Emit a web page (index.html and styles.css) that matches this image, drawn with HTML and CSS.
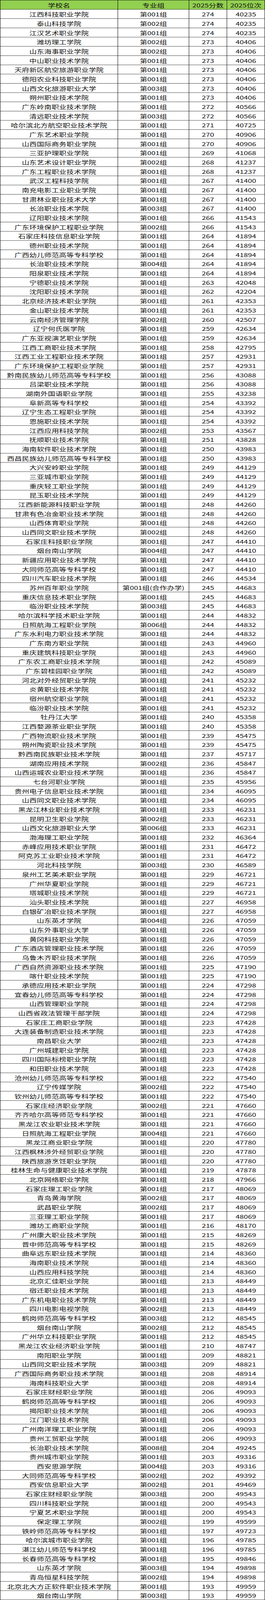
FILE: index.html
```html
<!DOCTYPE html>
<html lang="zh-CN">
<head>
<meta charset="utf-8">
<title>2025 分数位次</title>
<link rel="stylesheet" href="styles.css">
</head>
<body>
<div class="frame">
<div class="sheet" role="table">
<div class="row head" role="row"><div class="cell" role="columnheader">学校名</div><div class="cell" role="columnheader">专业组</div><div class="cell" role="columnheader">2025分数</div><div class="cell" role="columnheader">2025位次</div></div>
<div class="row" role="row"><div class="cell">江西科技职业学院</div><div class="cell">第001组</div><div class="cell">274</div><div class="cell">40235</div></div>
<div class="row" role="row"><div class="cell">泰山科技学院</div><div class="cell">第002组</div><div class="cell">274</div><div class="cell">40235</div></div>
<div class="row" role="row"><div class="cell">江汉艺术职业学院</div><div class="cell">第001组</div><div class="cell">274</div><div class="cell">40235</div></div>
<div class="row" role="row"><div class="cell">潍坊理工学院</div><div class="cell">第002组</div><div class="cell">273</div><div class="cell">40406</div></div>
<div class="row" role="row"><div class="cell">山东海事职业学院</div><div class="cell">第002组</div><div class="cell">273</div><div class="cell">40406</div></div>
<div class="row" role="row"><div class="cell">中山职业技术学院</div><div class="cell">第001组</div><div class="cell">273</div><div class="cell">40406</div></div>
<div class="row" role="row"><div class="cell">天府新区航空旅游职业学院</div><div class="cell">第001组</div><div class="cell">273</div><div class="cell">40406</div></div>
<div class="row" role="row"><div class="cell">德阳农业科技职业学院</div><div class="cell">第001组</div><div class="cell">273</div><div class="cell">40406</div></div>
<div class="row" role="row"><div class="cell">山西文化旅游职业大学</div><div class="cell">第003组</div><div class="cell">273</div><div class="cell">40406</div></div>
<div class="row" role="row"><div class="cell">朔州职业技术学院</div><div class="cell">第001组</div><div class="cell">273</div><div class="cell">40406</div></div>
<div class="row" role="row"><div class="cell">广东岭南职业技术学院</div><div class="cell">第001组</div><div class="cell">272</div><div class="cell">40566</div></div>
<div class="row" role="row"><div class="cell">清远职业技术学院</div><div class="cell">第003组</div><div class="cell">272</div><div class="cell">40566</div></div>
<div class="row" role="row"><div class="cell">哈尔滨北方航空职业技术学院</div><div class="cell">第001组</div><div class="cell">271</div><div class="cell">40725</div></div>
<div class="row" role="row"><div class="cell">广东艺术职业学院</div><div class="cell">第001组</div><div class="cell">270</div><div class="cell">40906</div></div>
<div class="row" role="row"><div class="cell">山西国际商务职业学院</div><div class="cell">第001组</div><div class="cell">270</div><div class="cell">40906</div></div>
<div class="row" role="row"><div class="cell">三亚护理职业学院</div><div class="cell">第001组</div><div class="cell">269</div><div class="cell">41068</div></div>
<div class="row" role="row"><div class="cell">山东艺术设计职业学院</div><div class="cell">第002组</div><div class="cell">268</div><div class="cell">41237</div></div>
<div class="row" role="row"><div class="cell">广东工程职业技术学院</div><div class="cell">第001组</div><div class="cell">268</div><div class="cell">41237</div></div>
<div class="row" role="row"><div class="cell">武汉工程科技学院</div><div class="cell">第001组</div><div class="cell">267</div><div class="cell">41400</div></div>
<div class="row" role="row"><div class="cell">南充电影工业职业学院</div><div class="cell">第001组</div><div class="cell">267</div><div class="cell">41400</div></div>
<div class="row" role="row"><div class="cell">甘肃林业职业技术大学</div><div class="cell">第001组</div><div class="cell">267</div><div class="cell">41400</div></div>
<div class="row" role="row"><div class="cell">长治职业技术学院</div><div class="cell">第003组</div><div class="cell">267</div><div class="cell">41400</div></div>
<div class="row" role="row"><div class="cell">辽阳职业技术学院</div><div class="cell">第001组</div><div class="cell">266</div><div class="cell">41543</div></div>
<div class="row" role="row"><div class="cell">广东环境保护工程职业学院</div><div class="cell">第002组</div><div class="cell">266</div><div class="cell">41543</div></div>
<div class="row" role="row"><div class="cell">石家庄科技信息职业学院</div><div class="cell">第001组</div><div class="cell">264</div><div class="cell">41894</div></div>
<div class="row" role="row"><div class="cell">德州职业技术学院</div><div class="cell">第001组</div><div class="cell">264</div><div class="cell">41894</div></div>
<div class="row" role="row"><div class="cell">广西幼儿师范高等专科学校</div><div class="cell">第001组</div><div class="cell">264</div><div class="cell">41894</div></div>
<div class="row" role="row"><div class="cell">长治职业技术学院</div><div class="cell">第004组</div><div class="cell">264</div><div class="cell">41894</div></div>
<div class="row" role="row"><div class="cell">阳泉职业技术学院</div><div class="cell">第001组</div><div class="cell">264</div><div class="cell">41894</div></div>
<div class="row" role="row"><div class="cell">宁德职业技术学院</div><div class="cell">第001组</div><div class="cell">263</div><div class="cell">42048</div></div>
<div class="row" role="row"><div class="cell">沈阳职业技术学院</div><div class="cell">第001组</div><div class="cell">262</div><div class="cell">42204</div></div>
<div class="row" role="row"><div class="cell">北京经济技术职业学院</div><div class="cell">第001组</div><div class="cell">261</div><div class="cell">42353</div></div>
<div class="row" role="row"><div class="cell">金山职业技术学院</div><div class="cell">第001组</div><div class="cell">261</div><div class="cell">42353</div></div>
<div class="row" role="row"><div class="cell">云南经济管理学院</div><div class="cell">第002组</div><div class="cell">260</div><div class="cell">42507</div></div>
<div class="row" role="row"><div class="cell">辽宁何氏医学院</div><div class="cell">第001组</div><div class="cell">259</div><div class="cell">42634</div></div>
<div class="row" role="row"><div class="cell">广东亚视演艺职业学院</div><div class="cell">第001组</div><div class="cell">259</div><div class="cell">42634</div></div>
<div class="row" role="row"><div class="cell">江西工商职业技术学院</div><div class="cell">第001组</div><div class="cell">258</div><div class="cell">42795</div></div>
<div class="row" role="row"><div class="cell">江西工业工程职业技术学院</div><div class="cell">第001组</div><div class="cell">257</div><div class="cell">42931</div></div>
<div class="row" role="row"><div class="cell">广东环境保护工程职业学院</div><div class="cell">第001组</div><div class="cell">257</div><div class="cell">42931</div></div>
<div class="row" role="row"><div class="cell">黔南民族幼儿师范高等专科学校</div><div class="cell">第001组</div><div class="cell">256</div><div class="cell">43088</div></div>
<div class="row" role="row"><div class="cell">吕梁职业技术学院</div><div class="cell">第001组</div><div class="cell">256</div><div class="cell">43088</div></div>
<div class="row" role="row"><div class="cell">湖南外国语职业学院</div><div class="cell">第001组</div><div class="cell">255</div><div class="cell">43238</div></div>
<div class="row" role="row"><div class="cell">阜新高等专科学校</div><div class="cell">第001组</div><div class="cell">254</div><div class="cell">43392</div></div>
<div class="row" role="row"><div class="cell">辽宁生态工程职业学院</div><div class="cell">第001组</div><div class="cell">254</div><div class="cell">43392</div></div>
<div class="row" role="row"><div class="cell">恩施职业技术学院</div><div class="cell">第001组</div><div class="cell">254</div><div class="cell">43392</div></div>
<div class="row" role="row"><div class="cell">江西应用科技学院</div><div class="cell">第002组</div><div class="cell">253</div><div class="cell">43567</div></div>
<div class="row" role="row"><div class="cell">抚顺职业技术学院</div><div class="cell">第001组</div><div class="cell">251</div><div class="cell">43828</div></div>
<div class="row" role="row"><div class="cell">海南软件职业技术学院</div><div class="cell">第001组</div><div class="cell">250</div><div class="cell">43983</div></div>
<div class="row" role="row"><div class="cell">西昌民族幼儿师范高等专科学校</div><div class="cell">第001组</div><div class="cell">250</div><div class="cell">43983</div></div>
<div class="row" role="row"><div class="cell">大兴安岭职业学院</div><div class="cell">第001组</div><div class="cell">249</div><div class="cell">44129</div></div>
<div class="row" role="row"><div class="cell">三亚城市职业学院</div><div class="cell">第001组</div><div class="cell">249</div><div class="cell">44129</div></div>
<div class="row" role="row"><div class="cell">重庆轻工职业学院</div><div class="cell">第001组</div><div class="cell">249</div><div class="cell">44129</div></div>
<div class="row" role="row"><div class="cell">昆玉职业技术学院</div><div class="cell">第001组</div><div class="cell">249</div><div class="cell">44129</div></div>
<div class="row" role="row"><div class="cell">江西新能源科技职业学院</div><div class="cell">第001组</div><div class="cell">248</div><div class="cell">44260</div></div>
<div class="row" role="row"><div class="cell">甘肃有色冶金职业技术学院</div><div class="cell">第001组</div><div class="cell">248</div><div class="cell">44260</div></div>
<div class="row" role="row"><div class="cell">山西体育职业学院</div><div class="cell">第001组</div><div class="cell">248</div><div class="cell">44260</div></div>
<div class="row" role="row"><div class="cell">山西同文职业技术学院</div><div class="cell">第002组</div><div class="cell">248</div><div class="cell">44260</div></div>
<div class="row" role="row"><div class="cell">石家庄科技职业学院</div><div class="cell">第001组</div><div class="cell">247</div><div class="cell">44410</div></div>
<div class="row" role="row"><div class="cell">烟台南山学院</div><div class="cell">第004组</div><div class="cell">247</div><div class="cell">44410</div></div>
<div class="row" role="row"><div class="cell">新疆应用职业技术学院</div><div class="cell">第001组</div><div class="cell">247</div><div class="cell">44410</div></div>
<div class="row" role="row"><div class="cell">大同师范高等专科学校</div><div class="cell">第001组</div><div class="cell">247</div><div class="cell">44410</div></div>
<div class="row" role="row"><div class="cell">四川汽车职业技术学院</div><div class="cell">第001组</div><div class="cell">246</div><div class="cell">44534</div></div>
<div class="row" role="row"><div class="cell">苏州百年职业学院</div><div class="cell">第001组(合作办学)</div><div class="cell">245</div><div class="cell">44683</div></div>
<div class="row" role="row"><div class="cell">重庆信息技术职业学院</div><div class="cell">第001组</div><div class="cell">245</div><div class="cell">44683</div></div>
<div class="row" role="row"><div class="cell">临汾职业技术学院</div><div class="cell">第003组</div><div class="cell">245</div><div class="cell">44683</div></div>
<div class="row" role="row"><div class="cell">哈尔滨科学技术职业学院</div><div class="cell">第001组</div><div class="cell">244</div><div class="cell">44832</div></div>
<div class="row" role="row"><div class="cell">日照航海工程职业学院</div><div class="cell">第006组</div><div class="cell">244</div><div class="cell">44832</div></div>
<div class="row" role="row"><div class="cell">广东水利电力职业技术学院</div><div class="cell">第001组</div><div class="cell">244</div><div class="cell">44832</div></div>
<div class="row" role="row"><div class="cell">广东南方职业学院</div><div class="cell">第001组</div><div class="cell">243</div><div class="cell">44960</div></div>
<div class="row" role="row"><div class="cell">重庆建筑科技职业学院</div><div class="cell">第001组</div><div class="cell">243</div><div class="cell">44960</div></div>
<div class="row" role="row"><div class="cell">广东农工商职业技术学院</div><div class="cell">第001组</div><div class="cell">242</div><div class="cell">45089</div></div>
<div class="row" role="row"><div class="cell">广东碧桂园职业学院</div><div class="cell">第001组</div><div class="cell">242</div><div class="cell">45089</div></div>
<div class="row" role="row"><div class="cell">河北对外经贸职业学院</div><div class="cell">第001组</div><div class="cell">241</div><div class="cell">45232</div></div>
<div class="row" role="row"><div class="cell">炎黄职业技术学院</div><div class="cell">第001组</div><div class="cell">241</div><div class="cell">45232</div></div>
<div class="row" role="row"><div class="cell">宿州航空职业学院</div><div class="cell">第001组</div><div class="cell">241</div><div class="cell">45232</div></div>
<div class="row" role="row"><div class="cell">临汾职业技术学院</div><div class="cell">第001组</div><div class="cell">241</div><div class="cell">45232</div></div>
<div class="row" role="row"><div class="cell">牡丹江大学</div><div class="cell">第001组</div><div class="cell">240</div><div class="cell">45358</div></div>
<div class="row" role="row"><div class="cell">江西婺源茶业职业学院</div><div class="cell">第001组</div><div class="cell">240</div><div class="cell">45358</div></div>
<div class="row" role="row"><div class="cell">广西物流职业技术学院</div><div class="cell">第001组</div><div class="cell">239</div><div class="cell">45475</div></div>
<div class="row" role="row"><div class="cell">朔州陶瓷职业技术学院</div><div class="cell">第001组</div><div class="cell">239</div><div class="cell">45475</div></div>
<div class="row" role="row"><div class="cell">黔西南民族职业技术学院</div><div class="cell">第001组</div><div class="cell">237</div><div class="cell">45717</div></div>
<div class="row" role="row"><div class="cell">湖南应用技术学院</div><div class="cell">第002组</div><div class="cell">236</div><div class="cell">45847</div></div>
<div class="row" role="row"><div class="cell">山西运城农业职业技术学院</div><div class="cell">第001组</div><div class="cell">236</div><div class="cell">45847</div></div>
<div class="row" role="row"><div class="cell">七台河职业学院</div><div class="cell">第001组</div><div class="cell">235</div><div class="cell">45956</div></div>
<div class="row" role="row"><div class="cell">贵州电子信息职业技术学院</div><div class="cell">第001组</div><div class="cell">234</div><div class="cell">46095</div></div>
<div class="row" role="row"><div class="cell">山西同文职业技术学院</div><div class="cell">第001组</div><div class="cell">234</div><div class="cell">46095</div></div>
<div class="row" role="row"><div class="cell">黑龙江林业职业技术学院</div><div class="cell">第001组</div><div class="cell">233</div><div class="cell">46231</div></div>
<div class="row" role="row"><div class="cell">昆明卫生职业学院</div><div class="cell">第002组</div><div class="cell">233</div><div class="cell">46231</div></div>
<div class="row" role="row"><div class="cell">山西文化旅游职业大学</div><div class="cell">第006组</div><div class="cell">233</div><div class="cell">46231</div></div>
<div class="row" role="row"><div class="cell">渤海理工职业学院</div><div class="cell">第001组</div><div class="cell">232</div><div class="cell">46364</div></div>
<div class="row" role="row"><div class="cell">赤峰应用技术职业学院</div><div class="cell">第001组</div><div class="cell">231</div><div class="cell">46472</div></div>
<div class="row" role="row"><div class="cell">阿克苏工业职业技术学院</div><div class="cell">第001组</div><div class="cell">231</div><div class="cell">46472</div></div>
<div class="row" role="row"><div class="cell">河北科技学院</div><div class="cell">第003组</div><div class="cell">230</div><div class="cell">46589</div></div>
<div class="row" role="row"><div class="cell">泉州工艺美术职业学院</div><div class="cell">第001组</div><div class="cell">229</div><div class="cell">46721</div></div>
<div class="row" role="row"><div class="cell">广州华夏职业学院</div><div class="cell">第001组</div><div class="cell">229</div><div class="cell">46721</div></div>
<div class="row" role="row"><div class="cell">塔城职业技术学院</div><div class="cell">第001组</div><div class="cell">229</div><div class="cell">46721</div></div>
<div class="row" role="row"><div class="cell">汕头职业技术学院</div><div class="cell">第001组</div><div class="cell">227</div><div class="cell">46958</div></div>
<div class="row" role="row"><div class="cell">白银矿冶职业技术学院</div><div class="cell">第001组</div><div class="cell">227</div><div class="cell">46958</div></div>
<div class="row" role="row"><div class="cell">山东英才学院</div><div class="cell">第004组</div><div class="cell">226</div><div class="cell">47059</div></div>
<div class="row" role="row"><div class="cell">山东外事职业大学</div><div class="cell">第001组</div><div class="cell">226</div><div class="cell">47059</div></div>
<div class="row" role="row"><div class="cell">黄冈科技职业学院</div><div class="cell">第001组</div><div class="cell">226</div><div class="cell">47059</div></div>
<div class="row" role="row"><div class="cell">广东酒店管理职业技术学院</div><div class="cell">第001组</div><div class="cell">226</div><div class="cell">47059</div></div>
<div class="row" role="row"><div class="cell">乌鲁木齐职业技术学院</div><div class="cell">第001组</div><div class="cell">226</div><div class="cell">47059</div></div>
<div class="row" role="row"><div class="cell">广西自然资源职业技术学院</div><div class="cell">第001组</div><div class="cell">225</div><div class="cell">47190</div></div>
<div class="row" role="row"><div class="cell">喀什职业技术学院</div><div class="cell">第001组</div><div class="cell">225</div><div class="cell">47190</div></div>
<div class="row" role="row"><div class="cell">承德应用技术职业学院</div><div class="cell">第001组</div><div class="cell">224</div><div class="cell">47298</div></div>
<div class="row" role="row"><div class="cell">宜春幼儿师范高等专科学校</div><div class="cell">第001组</div><div class="cell">224</div><div class="cell">47298</div></div>
<div class="row" role="row"><div class="cell">山西管理职业学院</div><div class="cell">第001组</div><div class="cell">224</div><div class="cell">47298</div></div>
<div class="row" role="row"><div class="cell">山西省政法管理干部学院</div><div class="cell">第001组</div><div class="cell">224</div><div class="cell">47298</div></div>
<div class="row" role="row"><div class="cell">石家庄工商职业学院</div><div class="cell">第001组</div><div class="cell">223</div><div class="cell">47428</div></div>
<div class="row" role="row"><div class="cell">大连装备制造职业技术学院</div><div class="cell">第001组</div><div class="cell">223</div><div class="cell">47428</div></div>
<div class="row" role="row"><div class="cell">南昌职业大学</div><div class="cell">第002组</div><div class="cell">223</div><div class="cell">47428</div></div>
<div class="row" role="row"><div class="cell">广州城建职业学院</div><div class="cell">第001组</div><div class="cell">223</div><div class="cell">47428</div></div>
<div class="row" role="row"><div class="cell">四川国际标榜职业学院</div><div class="cell">第001组</div><div class="cell">223</div><div class="cell">47428</div></div>
<div class="row" role="row"><div class="cell">和田职业技术学院</div><div class="cell">第001组</div><div class="cell">223</div><div class="cell">47428</div></div>
<div class="row" role="row"><div class="cell">沧州幼儿师范高等专科学校</div><div class="cell">第001组</div><div class="cell">222</div><div class="cell">47540</div></div>
<div class="row" role="row"><div class="cell">辽宁传媒学院</div><div class="cell">第002组</div><div class="cell">222</div><div class="cell">47540</div></div>
<div class="row" role="row"><div class="cell">钦州幼儿师范高等专科学校</div><div class="cell">第001组</div><div class="cell">222</div><div class="cell">47540</div></div>
<div class="row" role="row"><div class="cell">石家庄经济职业学院</div><div class="cell">第002组</div><div class="cell">221</div><div class="cell">47660</div></div>
<div class="row" role="row"><div class="cell">齐齐哈尔高等师范专科学校</div><div class="cell">第001组</div><div class="cell">221</div><div class="cell">47660</div></div>
<div class="row" role="row"><div class="cell">黑龙江农业职业技术学院</div><div class="cell">第001组</div><div class="cell">221</div><div class="cell">47660</div></div>
<div class="row" role="row"><div class="cell">日照航海工程职业学院</div><div class="cell">第004组</div><div class="cell">221</div><div class="cell">47660</div></div>
<div class="row" role="row"><div class="cell">黑龙江商业职业学院</div><div class="cell">第001组</div><div class="cell">220</div><div class="cell">47780</div></div>
<div class="row" role="row"><div class="cell">江西枫林涉外经贸职业学院</div><div class="cell">第001组</div><div class="cell">220</div><div class="cell">47780</div></div>
<div class="row" role="row"><div class="cell">陕西旅游烹饪职业学院</div><div class="cell">第001组</div><div class="cell">220</div><div class="cell">47780</div></div>
<div class="row" role="row"><div class="cell">桂林生命与健康职业技术学院</div><div class="cell">第001组</div><div class="cell">219</div><div class="cell">47878</div></div>
<div class="row" role="row"><div class="cell">北京网络职业学院</div><div class="cell">第001组</div><div class="cell">218</div><div class="cell">47966</div></div>
<div class="row" role="row"><div class="cell">石家庄理工职业学院</div><div class="cell">第001组</div><div class="cell">217</div><div class="cell">48069</div></div>
<div class="row" role="row"><div class="cell">青岛黄海学院</div><div class="cell">第002组</div><div class="cell">217</div><div class="cell">48069</div></div>
<div class="row" role="row"><div class="cell">武昌职业学院</div><div class="cell">第002组</div><div class="cell">217</div><div class="cell">48069</div></div>
<div class="row" role="row"><div class="cell">三亚理工职业学院</div><div class="cell">第001组</div><div class="cell">217</div><div class="cell">48069</div></div>
<div class="row" role="row"><div class="cell">潍坊工商职业学院</div><div class="cell">第001组</div><div class="cell">216</div><div class="cell">48170</div></div>
<div class="row" role="row"><div class="cell">广州康大职业技术学院</div><div class="cell">第001组</div><div class="cell">215</div><div class="cell">48269</div></div>
<div class="row" role="row"><div class="cell">晋中师范高等专科学校</div><div class="cell">第001组</div><div class="cell">215</div><div class="cell">48269</div></div>
<div class="row" role="row"><div class="cell">曲阜远东职业技术学院</div><div class="cell">第001组</div><div class="cell">214</div><div class="cell">48360</div></div>
<div class="row" role="row"><div class="cell">海南职业技术学院</div><div class="cell">第001组</div><div class="cell">214</div><div class="cell">48360</div></div>
<div class="row" role="row"><div class="cell">山西应用科技学院</div><div class="cell">第003组</div><div class="cell">214</div><div class="cell">48360</div></div>
<div class="row" role="row"><div class="cell">北京汇佳职业学院</div><div class="cell">第001组</div><div class="cell">213</div><div class="cell">48449</div></div>
<div class="row" role="row"><div class="cell">宿迁职业技术学院</div><div class="cell">第001组</div><div class="cell">213</div><div class="cell">48449</div></div>
<div class="row" role="row"><div class="cell">广东机电职业技术学院</div><div class="cell">第001组</div><div class="cell">213</div><div class="cell">48449</div></div>
<div class="row" role="row"><div class="cell">四川电影电视学院</div><div class="cell">第002组</div><div class="cell">213</div><div class="cell">48449</div></div>
<div class="row" role="row"><div class="cell">鹤岗师范高等专科学校</div><div class="cell">第003组</div><div class="cell">212</div><div class="cell">48545</div></div>
<div class="row" role="row"><div class="cell">烟台南山学院</div><div class="cell">第002组</div><div class="cell">212</div><div class="cell">48545</div></div>
<div class="row" role="row"><div class="cell">广州华立科技职业学院</div><div class="cell">第001组</div><div class="cell">212</div><div class="cell">48545</div></div>
<div class="row" role="row"><div class="cell">黑龙江农业经济职业学院</div><div class="cell">第001组</div><div class="cell">210</div><div class="cell">48747</div></div>
<div class="row" role="row"><div class="cell">南阳职业学院</div><div class="cell">第001组</div><div class="cell">209</div><div class="cell">48821</div></div>
<div class="row" role="row"><div class="cell">山西同文职业技术学院</div><div class="cell">第003组</div><div class="cell">209</div><div class="cell">48821</div></div>
<div class="row" role="row"><div class="cell">广西国际商务职业技术学院</div><div class="cell">第001组</div><div class="cell">208</div><div class="cell">48914</div></div>
<div class="row" role="row"><div class="cell">海南科技职业大学</div><div class="cell">第003组</div><div class="cell">208</div><div class="cell">48914</div></div>
<div class="row" role="row"><div class="cell">石家庄财经职业学院</div><div class="cell">第001组</div><div class="cell">206</div><div class="cell">49093</div></div>
<div class="row" role="row"><div class="cell">鹤岗师范高等专科学校</div><div class="cell">第001组</div><div class="cell">206</div><div class="cell">49093</div></div>
<div class="row" role="row"><div class="cell">揭阳职业技术学院</div><div class="cell">第001组</div><div class="cell">206</div><div class="cell">49093</div></div>
<div class="row" role="row"><div class="cell">江门职业技术学院</div><div class="cell">第001组</div><div class="cell">206</div><div class="cell">49093</div></div>
<div class="row" role="row"><div class="cell">广州南洋理工职业学院</div><div class="cell">第001组</div><div class="cell">206</div><div class="cell">49093</div></div>
<div class="row" role="row"><div class="cell">贵州工贸职业学院</div><div class="cell">第001组</div><div class="cell">206</div><div class="cell">49093</div></div>
<div class="row" role="row"><div class="cell">长治职业技术学院</div><div class="cell">第008组</div><div class="cell">204</div><div class="cell">49245</div></div>
<div class="row" role="row"><div class="cell">贵州城市职业学院</div><div class="cell">第001组</div><div class="cell">203</div><div class="cell">49316</div></div>
<div class="row" role="row"><div class="cell">西安思源学院</div><div class="cell">第004组</div><div class="cell">203</div><div class="cell">49316</div></div>
<div class="row" role="row"><div class="cell">大同师范高等专科学校</div><div class="cell">第002组</div><div class="cell">202</div><div class="cell">49392</div></div>
<div class="row" role="row"><div class="cell">西安信息职业大学</div><div class="cell">第002组</div><div class="cell">201</div><div class="cell">49469</div></div>
<div class="row" role="row"><div class="cell">石家庄财经职业学院</div><div class="cell">第003组</div><div class="cell">200</div><div class="cell">49543</div></div>
<div class="row" role="row"><div class="cell">四川科技职业学院</div><div class="cell">第001组</div><div class="cell">200</div><div class="cell">49543</div></div>
<div class="row" role="row"><div class="cell">宁夏艺术职业学院</div><div class="cell">第001组</div><div class="cell">200</div><div class="cell">49543</div></div>
<div class="row" role="row"><div class="cell">保定理工学院</div><div class="cell">第002组</div><div class="cell">199</div><div class="cell">49599</div></div>
<div class="row" role="row"><div class="cell">铁岭师范高等专科学校</div><div class="cell">第001组</div><div class="cell">197</div><div class="cell">49723</div></div>
<div class="row" role="row"><div class="cell">哈尔滨城市职业学院</div><div class="cell">第001组</div><div class="cell">196</div><div class="cell">49785</div></div>
<div class="row" role="row"><div class="cell">湛江幼儿师范专科学校</div><div class="cell">第001组</div><div class="cell">196</div><div class="cell">49785</div></div>
<div class="row" role="row"><div class="cell">长春师范高等专科学校</div><div class="cell">第001组</div><div class="cell">195</div><div class="cell">49846</div></div>
<div class="row" role="row"><div class="cell">山东英才学院</div><div class="cell">第003组</div><div class="cell">194</div><div class="cell">49898</div></div>
<div class="row" role="row"><div class="cell">青岛恒星科技学院</div><div class="cell">第002组</div><div class="cell">194</div><div class="cell">49898</div></div>
<div class="row" role="row"><div class="cell">北京北大方正软件职业技术学院</div><div class="cell">第001组</div><div class="cell">193</div><div class="cell">49959</div></div>
<div class="row" role="row"><div class="cell">烟台南山学院</div><div class="cell">第003组</div><div class="cell">193</div><div class="cell">49959</div></div>
</div>
</div>
<script src="app.js"></script>
</body>
</html>
```

FILE: styles.css
```css
html, body {
  margin: 0;
  padding: 0;
  background: #ffffff;
}

body {
  font-family: "Noto Sans CJK SC", "Noto Sans", sans-serif;
  color: #111111;
}

.frame {
  width: 678px;
  overflow: hidden;
}

.sheet {
  width: 678px;
  box-sizing: border-box;
  display: flex;
  flex-direction: column;
  gap: 1px;
  padding: 1px;
  background: #000000;
  transform-origin: 0 0;
}

.row {
  display: grid;
  grid-template-columns: 300px 181px 96px 96px;
  grid-template-rows: 32px;
  column-gap: 1px;
  height: 32px;
}

.cell {
  display: flex;
  align-items: center;
  justify-content: center;
  height: 32px;
  white-space: nowrap;
  font-size: 19px;
  line-height: 1;
  background: #ffffff;
}

.head .cell {
  background: #92d050;
}
```

FILE: app.js
```js
(function () {
  var frame = document.querySelector('.frame');
  var sheet = document.querySelector('.sheet');
  var full = sheet.offsetHeight;
  var avail = window.innerHeight;
  var k = Math.min(1, avail / full);
  sheet.style.transform = 'scaleY(' + k + ')';
  frame.style.height = (full * k) + 'px';
})();
```
